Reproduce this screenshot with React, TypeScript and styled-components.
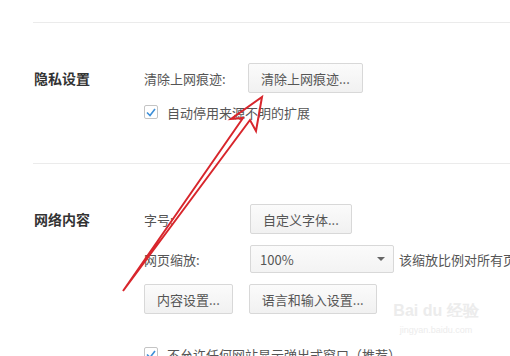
import React from 'react';
import styled, { createGlobalStyle } from 'styled-components';

const GlobalStyle = createGlobalStyle`
  html, body {
    margin: 0;
    padding: 0;
    background: #fff;
    overflow: hidden;
  }
  body {
    font-family: "Noto Sans CJK SC", "Noto Sans", sans-serif;
    font-size: 13px;
    color: #555;
  }
`;

// style
const Page = styled.div`
  position: relative;
  width: 510px;
  height: 356px;
  overflow: hidden;
  padding-left: 33px;
  padding-top: 22px;
  box-sizing: border-box;
  white-space: nowrap;
`;

const Section = styled.section<{ $top: number; $bottom: number }>`
  display: grid;
  grid-template-columns: 111px auto;
  border-top: 1px solid #ebebeb;
  padding-top: ${(p) => p.$top}px;
  padding-bottom: ${(p) => p.$bottom}px;
`;

const Heading = styled.h2`
  margin: 0;
  font-size: 14px;
  font-weight: 700;
  color: #333;
  line-height: 30px;
  padding-left: 1px;
`;

const Rows = styled.div`
  display: flex;
  flex-direction: column;
  gap: 11px;
`;

const Row = styled.div<{ $tall?: boolean }>`
  display: flex;
  align-items: center;
  height: ${(p) => (p.$tall ? 30 : 28)}px;
`;

const Label = styled.span<{ $width: number }>`
  display: inline-block;
  width: ${(p) => p.$width}px;
  color: #555;
`;

const Button = styled.button`
  height: 30px;
  padding: 0 12px;
  font-family: inherit;
  font-size: 13px;
  color: #555;
  background: linear-gradient(#fbfbfb, #f1f1f1);
  border: 1px solid #d8d8d8;
  border-radius: 2px;
  box-sizing: border-box;
`;

const ButtonRow = styled.div`
  display: flex;
  gap: 16px;
  height: 30px;
`;

const Select = styled.div`
  display: flex;
  align-items: center;
  justify-content: space-between;
  width: 144px;
  height: 28px;
  padding: 0 8px 0 9px;
  box-sizing: border-box;
  background: linear-gradient(#fbfbfb, #f3f3f3);
  border: 1px solid #d8d8d8;
  border-radius: 2px;
  color: #555;
`;

const Caret = styled.span`
  width: 0;
  height: 0;
  border-left: 4px solid transparent;
  border-right: 4px solid transparent;
  border-top: 4px solid #666;
`;

const Note = styled.span`
  margin-left: 5px;
  color: #555;
`;

const CheckRow = styled.label<{ $gapTop?: number }>`
  display: flex;
  align-items: center;
  gap: 9px;
  height: 16px;
  margin-top: ${(p) => p.$gapTop ?? 0}px;
  color: #555;
`;

const Box = styled.span`
  display: inline-flex;
  align-items: center;
  justify-content: center;
  width: 14px;
  height: 14px;
  border: 1px solid #c4c4c4;
  border-radius: 2px;
  background: #fff;
  box-sizing: border-box;
`;

const Watermark = styled.div`
  position: absolute;
  left: 391px;
  top: 303px;
  width: 90px;
  color: #ececec;
  font-family: "Liberation Sans", sans-serif;
  text-align: center;
  line-height: 1;
  b {
    display: block;
    font-size: 16px;
    font-weight: 700;
  }
  small {
    display: block;
    margin-top: 7px;
    font-size: 9px;
  }
`;

const Overlay = styled.svg`
  position: absolute;
  left: 0;
  top: 0;
  pointer-events: none;
`;

function Check() {
  return (
    <Box>
      <svg width="10" height="9" viewBox="0 0 10 9">
        <path d="M1 4.5 L4 7.5 L9 1" fill="none" stroke="#3d8fd8" strokeWidth="1.6" />
      </svg>
    </Box>
  );
}

function App() {
  return (
    <>
      <GlobalStyle />
      <Page>
        <Section $top={40} $bottom={43}>
          <Heading>隐私设置</Heading>
          <Rows>
            <Row $tall>
              <Label $width={104}>清除上网痕迹:</Label>
              <Button>清除上网痕迹...</Button>
            </Row>
            <CheckRow>
              <Check />
              自动停用来源不明的扩展
            </CheckRow>
          </Rows>
        </Section>
        <Section $top={40} $bottom={0}>
          <Heading>网络内容</Heading>
          <Rows>
            <Row $tall>
              <Label $width={106}>字号:</Label>
              <Button>自定义字体...</Button>
            </Row>
            <Row>
              <Label $width={106}>网页缩放:</Label>
              <Select>
                100%
                <Caret />
              </Select>
              <Note>该缩放比例对所有页面有效</Note>
            </Row>
            <ButtonRow>
              <Button>内容设置...</Button>
              <Button>语言和输入设置...</Button>
            </ButtonRow>
            <CheckRow $gapTop={21}>
              <Check />
              不允许任何网站显示弹出式窗口（推荐）
            </CheckRow>
          </Rows>
        </Section>
        <Watermark>
          <b>Bai du 经验</b>
          <small>jingyan.baidu.com</small>
        </Watermark>
        <Overlay width="510" height="356" viewBox="0 0 510 356">
          <path
            d="M123 291 L243 118 L231 119 L262 97 L256 131 L250 120 L123 291 Z"
            fill="none"
            stroke="#d8262c"
            strokeWidth="2"
            strokeLinejoin="miter"
          />
        </Overlay>
      </Page>
    </>
  );
}

export default App;
